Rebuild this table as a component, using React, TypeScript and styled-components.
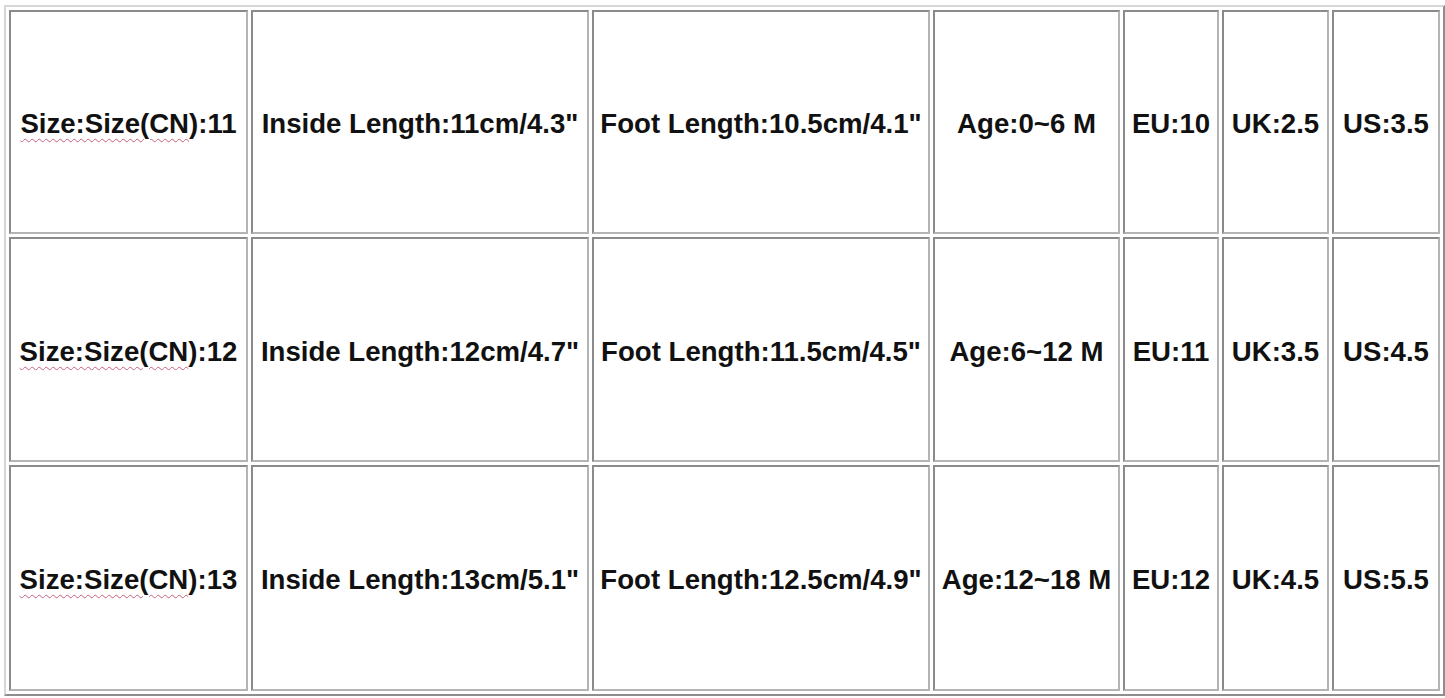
import styled, { createGlobalStyle } from "styled-components"

const GlobalStyle = createGlobalStyle`
    html, body {
        margin: 0;
        padding: 0;
        background: #ffffff;
    }
    body {
        font-family: "Liberation Sans", Arial, sans-serif;
    }
`

const Page = styled.div`
    padding: 5px 0 0 4px;
`

const SizeTable = styled.table`
    table-layout: fixed;
    width: 1438px;
    border-collapse: separate;
    border-spacing: 3px;
    border-style: solid;
    border-width: 2px;
    border-color: #d6d6d6 #8e8e8e #8e8e8e #d6d6d6;
`

const Cell = styled.td<{ $w?: number; $h: number }>`
    box-sizing: border-box;
    width: ${(p) => (p.$w ? `${p.$w}px` : "auto")};
    height: ${(p) => p.$h}px;
    padding: 4px 4px 0;
    text-align: center;
    vertical-align: middle;
    white-space: nowrap;
    border-style: solid;
    border-width: 2px;
    border-color: #8a8a8a #b4b4b4 #b4b4b4 #8a8a8a;
    font-family: "Liberation Sans", Arial, sans-serif;
    font-weight: bold;
    font-size: 27.6px;
    color: #111111;
`

const Squiggle = styled.span`
    text-decoration-line: underline;
    text-decoration-style: wavy;
    text-decoration-color: #c8607a;
    text-decoration-thickness: 1.3px;
    text-underline-offset: 5px;
`

const widths = [239, 338, 338, 187, 96, 107, 108]
const heights = [224, 225, 226]

const rows = [
    { cn: "11", inside: "11cm/4.3\"", foot: "10.5cm/4.1\"", age: "0~6 M", eu: "10", uk: "2.5", us: "3.5" },
    { cn: "12", inside: "12cm/4.7\"", foot: "11.5cm/4.5\"", age: "6~12 M", eu: "11", uk: "3.5", us: "4.5" },
    { cn: "13", inside: "13cm/5.1\"", foot: "12.5cm/4.9\"", age: "12~18 M", eu: "12", uk: "4.5", us: "5.5" },
]

export default function App() {
    return (
        <Page>
            <GlobalStyle />
            <SizeTable>
                <tbody>
                    {rows.map((r, i) => {
                        const w = (n: number) => (i === 0 ? widths[n] : undefined)
                        const h = heights[i]
                        return (
                            <tr key={r.cn}>
                                <Cell $w={w(0)} $h={h}>
                                    <Squiggle>Size:Size(CN</Squiggle>):{r.cn}
                                </Cell>
                                <Cell $w={w(1)} $h={h}>Inside Length:{r.inside}</Cell>
                                <Cell $w={w(2)} $h={h}>Foot Length:{r.foot}</Cell>
                                <Cell $w={w(3)} $h={h}>Age:{r.age}</Cell>
                                <Cell $w={w(4)} $h={h}>EU:{r.eu}</Cell>
                                <Cell $w={w(5)} $h={h}>UK:{r.uk}</Cell>
                                <Cell $w={w(6)} $h={h}>US:{r.us}</Cell>
                            </tr>
                        )
                    })}
                </tbody>
            </SizeTable>
        </Page>
    )
}
